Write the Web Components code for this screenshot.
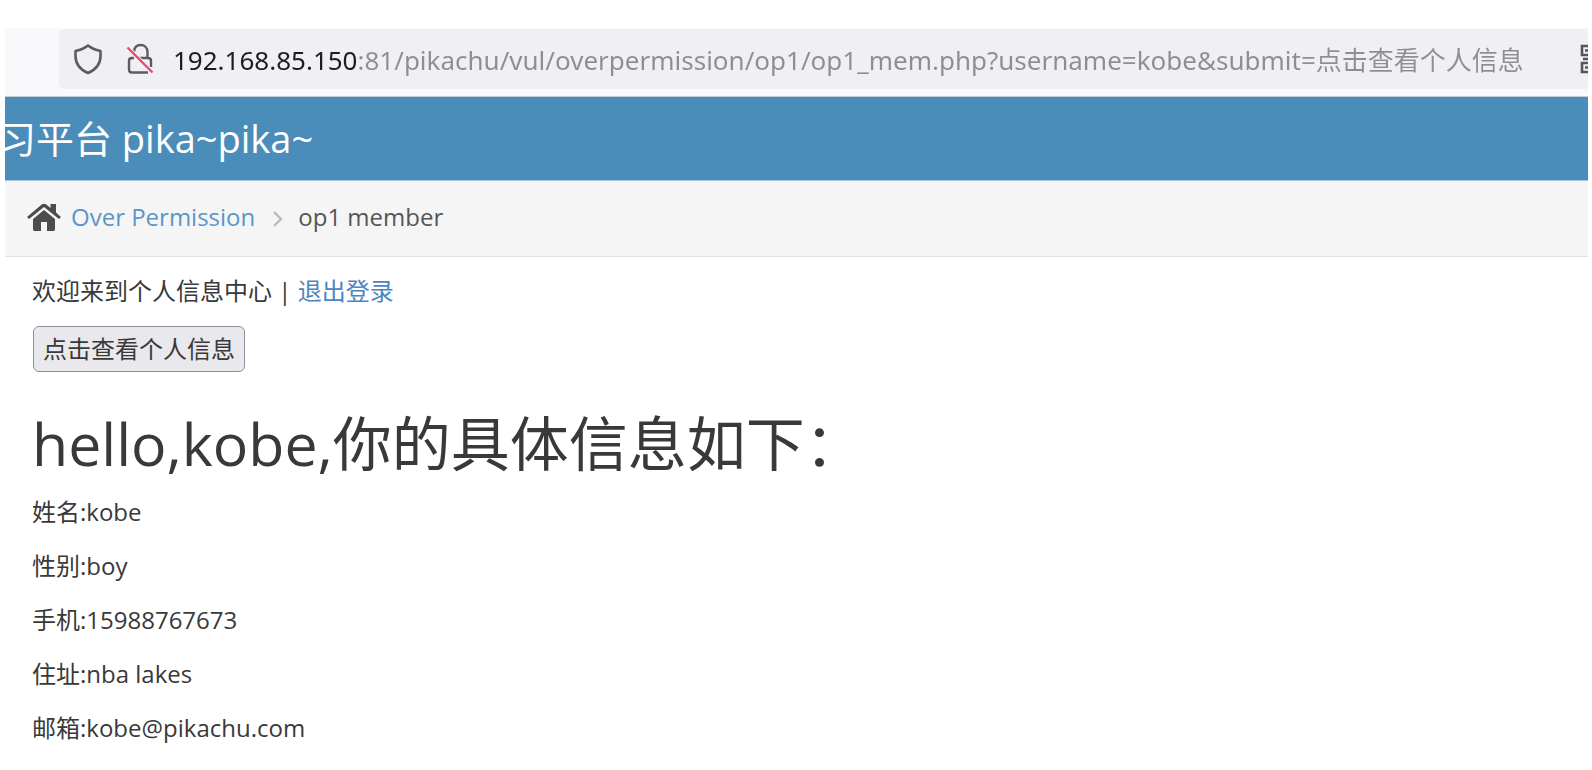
<!DOCTYPE html>
<html lang="zh-CN">
<head>
<meta charset="utf-8">
<title>Pikachu - op1 member</title>
<style>
body { margin: 0; background: #fff; color: #393939; font: 24px/36px "Open Sans", "Noto Sans CJK SC", sans-serif; }
</style>
</head>
<body>
<pika-page>
  <url-bar slot="chrome" value="192.168.85.150:81/pikachu/vul/overpermission/op1/op1_mem.php?username=kobe&amp;submit=点击查看个人信息"></url-bar>
  <site-header slot="header">习平台 pika~pika~</site-header>
  <crumb-trail slot="trail" current="op1 member">Over Permission</crumb-trail>
  <member-panel>
    <member-field label="姓名">kobe</member-field>
    <member-field label="性别">boy</member-field>
    <member-field label="手机">15988767673</member-field>
    <member-field label="住址">nba lakes</member-field>
    <member-field label="邮箱">kobe@pikachu.com</member-field>
  </member-panel>
</pika-page>
<script>
function define(name, html, setup) {
  const template = document.createElement('template');
  template.innerHTML = html;
  customElements.define(name, class extends HTMLElement {
    constructor() {
      super();
      this.attachShadow({ mode: 'open' }).append(template.content.cloneNode(true));
    }
    connectedCallback() { if (setup) setup(this, this.shadowRoot); }
  });
}

define('pika-page', `
<style>
  :host { display: block; padding: 28px 4px 0 5px; }
</style>
<slot name="chrome"></slot>
<slot name="header"></slot>
<slot name="trail"></slot>
<main><slot></slot></main>`);

define('url-bar', `
<style>
  :host { display: block; background: #f9f9fb; padding: 1px 0 7px 54px; border-bottom: 1px solid #c4ccd6; overflow: hidden; }
  .field { display: flex; align-items: center; height: 60px; padding-left: 14px; background: #f0f0f4; border-radius: 6px 0 0 6px; overflow: hidden; }
  svg { flex: none; display: block; }
  .lock { margin: 0 16px 0 20px; }
  input { flex: 1; min-width: 0; height: 48px; padding: 0; border: 0; outline: 0; font-family: "Noto Sans", "Noto Sans CJK SC", sans-serif; font-size: 26px;
    background: linear-gradient(to right, #1d1c25 184px, #8d8d94 184px); -webkit-background-clip: text; background-clip: text; color: transparent; }
</style>
<div class="field">
  <svg width="32" height="32" viewBox="0 0 32 32" fill="none" stroke="#5b5b61" stroke-width="2.6" stroke-linejoin="round"><path d="M15 2.500C18.500 5.500 23 7 27.500 8V13C27.500 21 22 27 15 30C8 27 2.500 21 2.500 13V8C7 7 11.500 5.500 15 2.500Z"/></svg>
  <svg class="lock" width="32" height="32" viewBox="0 0 32 32" fill="none" stroke="#5b5b61" stroke-width="2.4" stroke-linejoin="round"><path d="M9 8.500C9.500 4 12 2 15.500 2C20 2 22.500 5 22.500 9V15M9 15H7Q4 15 4 18V26.500Q4 29.500 7 29.500H23M13 15H23Q26 15 26 18V24"/><path d="M3 5L28 30" stroke="#f0f0f4" stroke-width="4.500"/><path d="M2.500 4.500L27.500 29.500" stroke="#e84a6f"/></svg>
  <input type="text" aria-label="URL" spellcheck="false">
  <svg width="8" height="32" viewBox="0 0 8 32" fill="none" stroke="#55555b" stroke-width="2.600"><path d="M9 3H2V12H9M9 20H2V29H9M5 7.500H9M5 24.500H9M3 16H9"/></svg>
</div>`, (host, root) => { root.querySelector('input').value = host.getAttribute('value'); });

define('site-header', `
<style>
  :host { display: block; background: #4a8dbb; color: #fff; border-bottom: 1px solid #a5c6dd; overflow: hidden; }
  h2 { margin: 0 0 0 -7px; font-size: 38px; line-height: 83px; font-weight: 400; white-space: nowrap; }
</style>
<h2><slot></slot></h2>`);

define('crumb-trail', `
<style>
  :host { display: block; background: #f5f5f5; border-bottom: 1px solid #e2e2e2; }
  nav { display: flex; align-items: center; height: 72px; padding: 0 0 3px 22px; color: #555; }
  a { color: #5a96c8; text-decoration: none; }
  .home { margin-right: 10px; }
  .sep { margin: 4px 14px 0 17px; }
  svg { display: block; }
</style>
<nav aria-label="breadcrumb">
  <svg class="home" width="34" height="28" viewBox="0 0 34 28" fill="#4d4d4d"><path d="M17 7L28 16V26Q28 28 26.500 28H20V19H14V28H7.500Q6 28 6 26V16Z"/><path d="M0 14L15 1.300Q17 0 19 1.300L23.500 5V1H29V9.500L34 14L32 16L17 4L2 16Z"/></svg>
  <a href="#"><slot></slot></a>
  <svg class="sep" width="12" height="18" viewBox="0 0 12 18" fill="none" stroke="#b6bbc2" stroke-width="2.400"><path d="M2 2L9 9L2 16"/></svg>
  <span id="current"></span>
</nav>`, (host, root) => { root.getElementById('current').textContent = host.getAttribute('current'); });

define('member-panel', `
<style>
  :host { display: block; padding: 16px 27px; }
  p { margin: 0; }
  a { color: #4a86c0; text-decoration: none; }
  button { display: block; margin: 17px 0 0 1px; height: 46px; padding: 0 9px; border: 1px solid #8f8f9d; border-radius: 6px; background: #e9e9ed; color: #393939; font: inherit; }
  h1 { margin: 32px 0 12px 0; font-size: 59px; line-height: 78px; font-weight: 400; }
</style>
<p>欢迎来到个人信息中心 | <a href="#">退出登录</a></p>
<form onsubmit="return false"><button type="submit">点击查看个人信息</button></form>
<h1>hello,kobe,你的具体信息如下：</h1>
<slot></slot>`);

define('member-field', `
<style>
  :host { display: block; margin-bottom: 18px; }
  p { margin: 0; }
</style>
<p><span id="label"></span>:<slot></slot></p>`, (host, root) => { root.getElementById('label').textContent = host.getAttribute('label'); });
</script>
</body>
</html>
